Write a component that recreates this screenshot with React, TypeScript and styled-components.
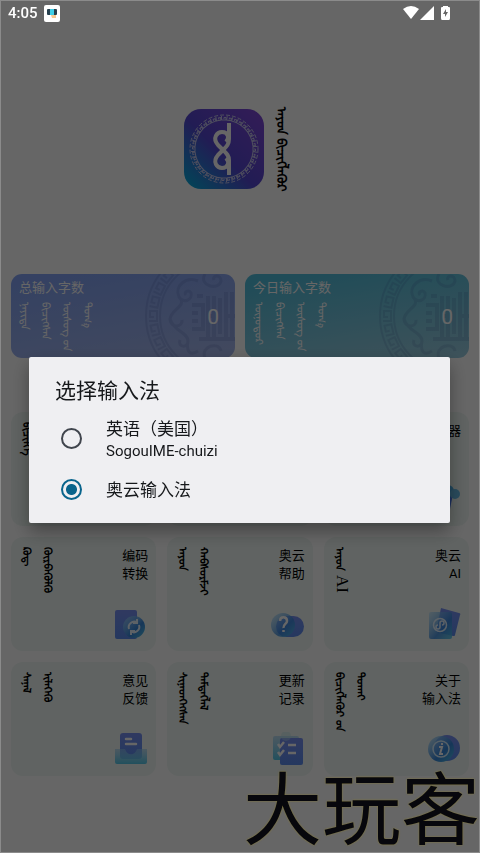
import React from 'react';
import styled, { createGlobalStyle } from 'styled-components';

const GlobalStyle = createGlobalStyle`
  * { box-sizing: border-box; }
  body { margin: 0; background: #fff; font-family: Roboto, "Noto Sans CJK SC", sans-serif; }
`;

const Page = styled.div`
  position: relative;
  min-height: 100vh;
  display: flex;
  flex-direction: column;
  overflow: hidden;
`;

const StatusBar = styled.header`
  position: relative;
  z-index: 2;
  display: flex;
  align-items: center;
  justify-content: space-between;
  height: 26px;
  padding: 0 28px 0 8px;
  color: #fff;
  font-size: 15px;
  font-weight: 500;
`;

const StatusGroup = styled.div`
  display: flex;
  align-items: center;
  gap: 6px;
`;

const Content = styled.main`
  display: flex;
  flex-direction: column;
  padding: 0 11px;
`;

const Brand = styled.section`
  display: flex;
  align-items: center;
  justify-content: center;
  gap: 12px;
  height: 248px;
  padding: 0 4px 2px 0;
`;

const Script = styled.span<{ $size?: number; $bold?: boolean }>`
  writing-mode: vertical-lr;
  white-space: nowrap;
  font-family: "Noto Sans Mongolian", "Mongolian Baiti", "Liberation Serif", serif;
  font-size: ${(p) => p.$size ?? 11}px;
  font-weight: ${(p) => (p.$bold ? 700 : 400)};
  line-height: 16px;
`;

const Latin = styled.span`
  font-family: "Liberation Serif", serif;
  font-size: 17px;
  font-weight: 400;
`;

const Columns = styled.div`
  display: flex;
  align-items: flex-start;
  gap: 5px;
`;

const Stats = styled.section`
  display: grid;
  grid-template-columns: 1fr 1fr;
  gap: 10px;
`;

const StatCard = styled.article<{ $from: string; $to: string }>`
  position: relative;
  overflow: hidden;
  height: 84px;
  padding: 4px 8px;
  border-radius: 11px;
  color: #fff;
  background: linear-gradient(170deg, ${(p) => p.$from} 10%, ${(p) => p.$to} 95%);
`;

const StatTitle = styled.h2`
  margin: 0 0 4px;
  font-size: 13px;
  line-height: 20px;
  font-weight: 400;
`;

const StatBody = styled.div`
  display: flex;
  justify-content: space-between;
`;

const StatValue = styled.strong`
  position: relative;
  padding-right: 8px;
  font-size: 21px;
  line-height: 30px;
  font-weight: 400;
`;

const Ornament = styled.svg`
  position: absolute;
  right: 0;
  top: 0;
  height: 84px;
  width: 92px;
`;

const Tiles = styled.nav`
  display: grid;
  grid-template-columns: repeat(3, 1fr);
  gap: 11px;
  padding-top: 54px;
`;

const Tile = styled.button`
  display: grid;
  grid-template-columns: auto 1fr;
  grid-template-rows: 1fr auto;
  height: 114px;
  padding: 10px 8px 10px 10px;
  border: 0;
  border-radius: 12px;
  background: #eff8f4;
  color: #000;
  font: inherit;
`;

const TileLabel = styled.span`
  justify-self: end;
  text-align: right;
  white-space: pre-line;
  font-size: 13px;
  line-height: 18px;
`;

const TileIcon = styled.svg`
  grid-column: 2;
  justify-self: end;
  width: 34px;
  height: 34px;
`;

const Scrim = styled.div`
  position: fixed;
  inset: 0;
  z-index: 1;
  display: flex;
  align-items: center;
  padding: 26px 30px 0 29px;
  background: rgba(0, 0, 0, 0.6);
  box-shadow: inset 0 0 0 1px #8b8b8b;
`;

const Dialog = styled.section`
  flex: 1;
  padding: 18px 26px 11px;
  border-radius: 2px;
  background: #efeff2;
  color: #16181b;
  box-shadow: 0 8px 18px rgba(0, 0, 0, 0.35);
`;

const DialogTitle = styled.h1`
  margin: 0 0 10px;
  font-size: 21px;
  line-height: 32px;
  font-weight: 400;
`;

const Options = styled.fieldset`
  margin: 0;
  padding: 0;
  border: 0;
  display: flex;
  flex-direction: column;
`;

const Option = styled.label`
  display: flex;
  align-items: center;
  gap: 24px;
  min-height: 44px;
  padding: 0 6px;

  & + & { margin-top: 7px; }
`;

const Radio = styled.input`
  appearance: none;
  flex: none;
  width: 21px;
  height: 21px;
  margin: 0;
  border: 2px solid #40454d;
  border-radius: 50%;

  &:checked {
    border-color: #08648c;
    background: radial-gradient(circle, #08648c 5px, transparent 6px);
  }
`;

const OptionText = styled.span`
  display: flex;
  flex-direction: column;
  font-size: 17px;
  line-height: 24px;
`;

const OptionSub = styled.small`
  font-size: 15px;
  line-height: 20px;
`;

const Watermark = styled.div`
  position: absolute;
  right: 0;
  bottom: 4px;
  z-index: 2;
  color: #07070c;
  font-family: "Noto Sans CJK SC", sans-serif;
  font-size: 79px;
  line-height: 88px;
  text-shadow: 0 0 2px #8a7c2c;
  pointer-events: none;
`;

const Defs = styled.svg`
  position: absolute;
`;

const Logo = () => (
  <svg width="80" height="80" viewBox="0 0 80 80" role="img" aria-label="logo">
    <defs>
      <linearGradient id="lg" x1="0" y1="1" x2="1" y2="0">
        <stop offset="0" stopColor="#00b4dc" />
        <stop offset=".45" stopColor="#5448d2" />
        <stop offset="1" stopColor="#8246d8" />
      </linearGradient>
    </defs>
    <rect width="80" height="80" rx="17" fill="url(#lg)" />
    <g fill="none" stroke="#c4c4ea" strokeWidth="1">
      <circle cx="40" cy="40" r="34" strokeDasharray="4 2" />
      {Array.from({ length: 36 }, (_, i) => (
        <path
          key={i}
          d="M37.500 7V11H42V8.500H40V10"
          transform={`rotate(${i * 10} 40 40)`}
        />
      ))}
    </g>
    <g fill="none" stroke="#fff" strokeWidth="4" strokeLinejoin="round">
      <path d="M45 14V30C45 36 42 38 38 42L34 46C28 53 33 59 38 59C44 59 46 53 42 49" />
      <path d="M45 66V51C45 46 42 44 38 40L34 36C28 29 33 23 38 23C44 23 46 29 42 33" />
    </g>
  </svg>
);

const Mandala = () => (
  <Ornament viewBox="0 0 92 84" fill="none" stroke="#304490" strokeOpacity=".14" aria-hidden="true">
    <circle cx="73" cy="42" r="70" strokeWidth="2" />
    <circle cx="73" cy="42" r="56" strokeWidth="2" />
    {Array.from({ length: 28 }, (_, i) => (
      <path
        key={i}
        d="M68 -25V-17H78V-24H72V-20"
        strokeWidth="2"
        transform={`rotate(${(i * 360) / 28} 73 42)`}
      />
    ))}
    <g strokeWidth="3">
      <path d="M55 7C43 2 31 12 36 23C40 30 50 26 48 19C46 15 40 18 43 21M36 23C45 32 28 35 27 45C27 54 40 54 39 46M27 45C31 58 45 58 45 67C45 75 34 73 37 66M55 77C47 82 43 78 45 67" />
      <path d="M62 0C55 12 76 17 78 7C78 0 69 1 71 6M62 84C57 72 76 67 78 77" />
    </g>
    <g strokeWidth="4">
      <path d="M49 31H60V55H49M49 39H55M49 47H55M65 22V63M71 22V63M65 42H77M77 24V60M83 18V66M89 18V66M83 42H92M56 65H92M60 22H54" />
    </g>
  </Ornament>
);

const Gradients = () => (
  <Defs width="0" height="0" aria-hidden="true">
    <defs>
      <linearGradient id="blue" x1="0" y1="0" x2="0" y2="1">
        <stop offset="0" stopColor="#7890f0" />
        <stop offset="1" stopColor="#5c8cee" />
      </linearGradient>
      <linearGradient id="cyan" x1="0" y1="0" x2="0" y2="1">
        <stop offset="0" stopColor="#92c8f0" stopOpacity=".55" />
        <stop offset="1" stopColor="#54c8e8" />
      </linearGradient>
      <linearGradient id="glass" x1="0" y1="0" x2="1" y2="1">
        <stop offset="0" stopColor="#a8dcff" stopOpacity=".6" />
        <stop offset=".6" stopColor="#3888dc" />
        <stop offset="1" stopColor="#50c4e8" />
      </linearGradient>
    </defs>
  </Defs>
);

const icons: Record<string, React.ReactNode> = {
  convert: (
    <>
      <rect x="1" y="3" width="22" height="29" rx="2" fill="url(#blue)" />
      <circle cx="20" cy="20" r="11" fill="url(#glass)" />
      <path d="M15 22A5.500 5.500 0 0 1 23 15.500M25 18A5.500 5.500 0 0 1 17 24.500M23 12V16H19M17 28V24H21" fill="none" stroke="#e8f4ff" strokeWidth="2" />
    </>
  ),
  help: (
    <>
      <rect x="5" y="9" width="28" height="21" rx="10.500" fill="url(#blue)" />
      <circle cx="12" cy="18" r="12" fill="url(#glass)" opacity=".8" />
      <path d="M9 14C9 9 16 9 16 14C16 17 12 17 12.500 21M12.500 23V25" fill="none" stroke="#fff" strokeWidth="2.500" />
    </>
  ),
  ai: (
    <>
      <path d="M14 1L32 6C33 6 34 7 33 8L28 28C28 29 27 29 26 29L9 25Z" fill="url(#blue)" />
      <rect x="2" y="5" width="23" height="27" rx="2" fill="url(#glass)" opacity=".85" />
      <circle cx="13" cy="18" r="6.500" fill="none" stroke="#e4f2ff" strokeWidth="1.500" />
      <path d="M11 18A2 2 0 1 0 13 20V16A2 2 0 1 1 15 18" fill="none" stroke="#e4f2ff" strokeWidth="1.500" />
    </>
  ),
  feedback: (
    <>
      <rect x="6" y="1" width="22" height="26" rx="3" fill="url(#blue)" />
      <path d="M1 17H11C13 24 21 24 23 17H33V30Q33 32 31 32H3Q1 32 1 30Z" fill="url(#cyan)" />
      <path d="M12 7H17M12 12H22" stroke="#fff" strokeWidth="2.500" strokeLinecap="round" />
    </>
  ),
  update: (
    <>
      <rect x="2" y="4" width="26" height="24" rx="2" fill="url(#cyan)" />
      <rect x="9" y="6" width="23" height="27" rx="2" fill="url(#blue)" />
      <circle cx="15" cy="4" r="5" fill="#b8e0ec" opacity=".4" />
      <path d="M7 12L9 15L13 10M7 20L9 23L13 18M17 13H25M17 21H25" fill="none" stroke="#fff" strokeWidth="2.500" />
    </>
  ),
  about: (
    <>
      <circle cx="20" cy="16" r="13" fill="url(#blue)" />
      <circle cx="14" cy="17" r="13" fill="url(#glass)" />
      <circle cx="14" cy="17" r="8" fill="none" stroke="#d8f0ff" strokeWidth="1.500" />
      <path d="M12 15H15L13 22H16M15 11V13" fill="none" stroke="#fff" strokeWidth="2" />
    </>
  ),
  device: (
    <>
      <path d="M16 12H26L23 27H16Z" fill="#4878ec" />
      <circle cx="21" cy="9" r="6" fill="#50b0e8" />
      <circle cx="28" cy="12" r="5" fill="#68bce8" />
    </>
  ),
};

const stats = [
  { title: '总输入字数', words: ['ᠨᠡᠶᠢᠲᠡ', 'ᠪᠢᠴᠢᠭᠰᠡᠨ', 'ᠦᠰᠦᠭ\u202fᠦᠨ', 'ᠲᠣᠭ᠎ᠠ'], from: '#84a4f4', to: '#a4b6ec' },
  { title: '今日输入字数', words: ['ᠥᠨᠥᠳᠦᠷ', 'ᠪᠢᠴᠢᠭᠰᠡᠨ', 'ᠦᠰᠦᠭ\u202fᠦᠨ', 'ᠲᠣᠭ᠎ᠠ'], from: '#52bedc', to: '#98cce0' },
];

const tiles = [
  { words: ['ᠪᠢᠴᠢᠯᠭᠡ'], label: '', icon: '' },
  { words: [], label: '', icon: '' },
  { words: [], label: '器', icon: 'device' },
  { words: ['ᠺᠣᠳ᠋', 'ᠬᠥᠷᠪᠡᠭᠦᠯᠬᠦ'], label: '编码\n转换', icon: 'convert' },
  { words: ['ᠠᠶᠤᠨ', 'ᠬᠠᠪᠰᠤᠷᠮᠵᠢ'], label: '奥云\n帮助', icon: 'help' },
  { words: ['ᠠᠶᠤᠨ'], latin: 'AI', label: '奥云\nAI', icon: 'ai' },
  { words: ['ᠰᠠᠨᠠᠯ', 'ᠢᠯᠡᠭᠡᠬᠦ'], label: '意见\n反馈', icon: 'feedback' },
  { words: ['ᠰᠢᠨᠡᠳᠭᠡᠭᠰᠡᠨ', 'ᠲᠡᠮᠳᠡᠭᠯᠡᠯ'], label: '更新\n记录', icon: 'update' },
  { words: ['ᠪᠢᠴᠢᠭᠯᠡᠭᠦᠷ\u202fᠦᠨ', 'ᠲᠤᠬᠠᠢ'], label: '关于\n输入法', icon: 'about' },
];

export default function App() {
  return (
    <Page>
      <GlobalStyle />
      <Gradients />
      <StatusBar>
        <StatusGroup>
          <span>4:05</span>
          <svg width="16" height="17" viewBox="0 0 16 17" aria-hidden="true">
            <rect width="16" height="17" rx="2" fill="#fff" />
            <rect x="3" y="4" width="10" height="6" rx="1" fill="#26404e" />
            <rect x="6" y="4" width="4" height="6" fill="#40d0e8" />
            <path d="M7 10H12V13H8Z" fill="#f8c890" />
          </svg>
        </StatusGroup>
        <svg width="49" height="16" viewBox="0 0 49 16" fill="#fff" aria-hidden="true">
          <path d="M0 4Q8 -2 16 4L8 14Z" />
          <path d="M31 1V15H17Z" />
          <path fillRule="evenodd" d="M40 1H45V2H46Q47 2 47 3V13Q47 15 46 15H39Q38 15 38 13V3Q38 2 39 2H40ZM43 4L40 9H42V12L45 7H43Z" />
        </svg>
      </StatusBar>
      <Content>
        <Brand>
          <Logo />
          <Script $size={13} $bold lang="mn-Mong">ᠠᠶᠤᠨ ᠪᠢᠴᠢᠭᠯᠡᠭᠦᠷ</Script>
        </Brand>
        <Stats>
          {stats.map((s) => (
            <StatCard key={s.title} $from={s.from} $to={s.to}>
              <Mandala />
              <StatTitle>{s.title}</StatTitle>
              <StatBody>
                <Columns>
                  {s.words.map((w) => <Script key={w} lang="mn-Mong">{w}</Script>)}
                </Columns>
                <StatValue>0</StatValue>
              </StatBody>
            </StatCard>
          ))}
        </Stats>
        <Tiles>
          {tiles.map((t, i) => (
            <Tile key={i} type="button">
              <Columns>
                {t.words.map((w) => (
                  <Script key={w} $bold lang="mn-Mong">
                    {w}
                    {t.latin && <Latin> {t.latin}</Latin>}
                  </Script>
                ))}
              </Columns>
              <TileLabel>{t.label}</TileLabel>
              {t.icon && <TileIcon viewBox="0 0 34 34" aria-hidden="true">{icons[t.icon]}</TileIcon>}
            </Tile>
          ))}
        </Tiles>
      </Content>
      <Scrim>
        <Dialog role="dialog" aria-modal="true" aria-labelledby="ime-title">
          <DialogTitle id="ime-title">选择输入法</DialogTitle>
          <Options aria-labelledby="ime-title">
            <Option>
              <Radio type="radio" name="ime" value="en" />
              <OptionText>
                英语（美国）
                <OptionSub>SogouIME-chuizi</OptionSub>
              </OptionText>
            </Option>
            <Option>
              <Radio type="radio" name="ime" value="aoyun" defaultChecked />
              <OptionText>奥云输入法</OptionText>
            </Option>
          </Options>
        </Dialog>
      </Scrim>
      <Watermark>大玩客</Watermark>
    </Page>
  );
}
